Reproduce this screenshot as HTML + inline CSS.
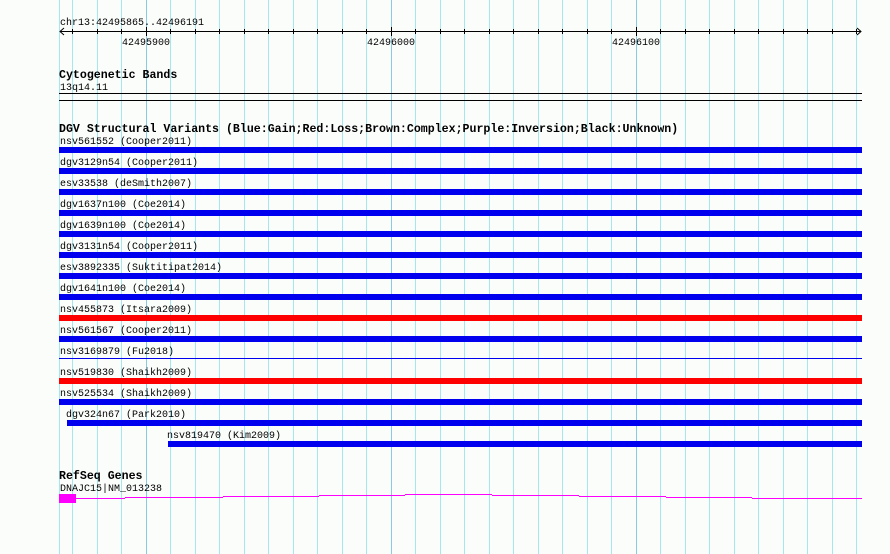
<!DOCTYPE html>
<html><head><style>
html,body{margin:0;padding:0;background:#fbfdfb;}
svg{display:block}
text{font-family:"Liberation Mono",monospace;font-size:10px;fill:#000}
.b{font-weight:bold;font-size:11.6px}
</style></head><body>
<svg width="890" height="554" xmlns="http://www.w3.org/2000/svg">
<rect width="890" height="554" fill="#fbfdfb"/>
<g stroke="#a6e6ee" stroke-width="1">
<line x1="59.5" y1="0" x2="59.5" y2="554"/>
<line x1="72.5" y1="0" x2="72.5" y2="554"/>
<line x1="97.5" y1="0" x2="97.5" y2="554"/>
<line x1="121.5" y1="0" x2="121.5" y2="554"/>
<line x1="146.5" y1="0" x2="146.5" y2="554" stroke="#88cce4"/>
<line x1="170.5" y1="0" x2="170.5" y2="554"/>
<line x1="195.5" y1="0" x2="195.5" y2="554"/>
<line x1="219.5" y1="0" x2="219.5" y2="554"/>
<line x1="244.5" y1="0" x2="244.5" y2="554"/>
<line x1="268.5" y1="0" x2="268.5" y2="554"/>
<line x1="293.5" y1="0" x2="293.5" y2="554"/>
<line x1="317.5" y1="0" x2="317.5" y2="554"/>
<line x1="342.5" y1="0" x2="342.5" y2="554"/>
<line x1="366.5" y1="0" x2="366.5" y2="554"/>
<line x1="391.5" y1="0" x2="391.5" y2="554" stroke="#88cce4"/>
<line x1="415.5" y1="0" x2="415.5" y2="554"/>
<line x1="440.5" y1="0" x2="440.5" y2="554"/>
<line x1="464.5" y1="0" x2="464.5" y2="554"/>
<line x1="489.5" y1="0" x2="489.5" y2="554"/>
<line x1="513.5" y1="0" x2="513.5" y2="554"/>
<line x1="538.5" y1="0" x2="538.5" y2="554"/>
<line x1="562.5" y1="0" x2="562.5" y2="554"/>
<line x1="587.5" y1="0" x2="587.5" y2="554"/>
<line x1="611.5" y1="0" x2="611.5" y2="554"/>
<line x1="636.5" y1="0" x2="636.5" y2="554" stroke="#88cce4"/>
<line x1="660.5" y1="0" x2="660.5" y2="554"/>
<line x1="685.5" y1="0" x2="685.5" y2="554"/>
<line x1="709.5" y1="0" x2="709.5" y2="554"/>
<line x1="734.5" y1="0" x2="734.5" y2="554"/>
<line x1="758.5" y1="0" x2="758.5" y2="554"/>
<line x1="783.5" y1="0" x2="783.5" y2="554"/>
<line x1="807.5" y1="0" x2="807.5" y2="554"/>
<line x1="832.5" y1="0" x2="832.5" y2="554"/>
<line x1="856.5" y1="0" x2="856.5" y2="554"/>
</g>
<g stroke="#000">
<line x1="72.5" y1="29" x2="72.5" y2="34"/>
<line x1="97.5" y1="29" x2="97.5" y2="34"/>
<line x1="121.5" y1="29" x2="121.5" y2="34"/>
<line x1="146.5" y1="27" x2="146.5" y2="36"/>
<line x1="170.5" y1="29" x2="170.5" y2="34"/>
<line x1="195.5" y1="29" x2="195.5" y2="34"/>
<line x1="219.5" y1="29" x2="219.5" y2="34"/>
<line x1="244.5" y1="29" x2="244.5" y2="34"/>
<line x1="268.5" y1="29" x2="268.5" y2="34"/>
<line x1="293.5" y1="29" x2="293.5" y2="34"/>
<line x1="317.5" y1="29" x2="317.5" y2="34"/>
<line x1="342.5" y1="29" x2="342.5" y2="34"/>
<line x1="366.5" y1="29" x2="366.5" y2="34"/>
<line x1="391.5" y1="27" x2="391.5" y2="36"/>
<line x1="415.5" y1="29" x2="415.5" y2="34"/>
<line x1="440.5" y1="29" x2="440.5" y2="34"/>
<line x1="464.5" y1="29" x2="464.5" y2="34"/>
<line x1="489.5" y1="29" x2="489.5" y2="34"/>
<line x1="513.5" y1="29" x2="513.5" y2="34"/>
<line x1="538.5" y1="29" x2="538.5" y2="34"/>
<line x1="562.5" y1="29" x2="562.5" y2="34"/>
<line x1="587.5" y1="29" x2="587.5" y2="34"/>
<line x1="611.5" y1="29" x2="611.5" y2="34"/>
<line x1="636.5" y1="27" x2="636.5" y2="36"/>
<line x1="660.5" y1="29" x2="660.5" y2="34"/>
<line x1="685.5" y1="29" x2="685.5" y2="34"/>
<line x1="709.5" y1="29" x2="709.5" y2="34"/>
<line x1="734.5" y1="29" x2="734.5" y2="34"/>
<line x1="758.5" y1="29" x2="758.5" y2="34"/>
<line x1="783.5" y1="29" x2="783.5" y2="34"/>
<line x1="807.5" y1="29" x2="807.5" y2="34"/>
<line x1="832.5" y1="29" x2="832.5" y2="34"/>
<line x1="856.5" y1="29" x2="856.5" y2="34"/>
</g>
<text x="60" y="25">chr13:42495865..42496191</text>
<line x1="60" y1="31.5" x2="861" y2="31.5" stroke="#000"/>
<polyline points="64,28 60,31.5 64,35" fill="none" stroke="#000"/>
<polyline points="857,28 861,31.5 857,35" fill="none" stroke="#000"/>
<text x="122" y="45">42495900</text>
<text x="367" y="45">42496000</text>
<text x="612" y="45">42496100</text>

<text class="b" x="59" y="78">Cytogenetic Bands</text>
<text x="60" y="90">13q14.11</text>
<line x1="59" y1="93.5" x2="862" y2="93.5" stroke="#000"/>
<line x1="59" y1="100.5" x2="862" y2="100.5" stroke="#000"/>

<text class="b" x="59" y="132">DGV Structural Variants (Blue:Gain;Red:Loss;Brown:Complex;Purple:Inversion;Black:Unknown)</text>
<g>
<text x="60" y="144">nsv561552 (Cooper2011)</text><rect x="59" y="147" width="803" height="6" fill="#0000ee"/>
<text x="60" y="165">dgv3129n54 (Cooper2011)</text><rect x="59" y="168" width="803" height="6" fill="#0000ee"/>
<text x="60" y="186">esv33538 (deSmith2007)</text><rect x="59" y="189" width="803" height="6" fill="#0000ee"/>
<text x="60" y="207">dgv1637n100 (Coe2014)</text><rect x="59" y="210" width="803" height="6" fill="#0000ee"/>
<text x="60" y="228">dgv1639n100 (Coe2014)</text><rect x="59" y="231" width="803" height="6" fill="#0000ee"/>
<text x="60" y="249">dgv3131n54 (Cooper2011)</text><rect x="59" y="252" width="803" height="6" fill="#0000ee"/>
<text x="60" y="270">esv3892335 (Suktitipat2014)</text><rect x="59" y="273" width="803" height="6" fill="#0000ee"/>
<text x="60" y="291">dgv1641n100 (Coe2014)</text><rect x="59" y="294" width="803" height="6" fill="#0000ee"/>
<text x="60" y="312">nsv455873 (Itsara2009)</text><rect x="59" y="315" width="803" height="6" fill="#ff0000"/>
<text x="60" y="333">nsv561567 (Cooper2011)</text><rect x="59" y="336" width="803" height="6" fill="#0000ee"/>
<text x="60" y="354">nsv3169879 (Fu2018)</text><rect x="59" y="358" width="803" height="1" fill="#0000ee"/>
<text x="60" y="375">nsv519830 (Shaikh2009)</text><rect x="59" y="378" width="803" height="6" fill="#ff0000"/>
<text x="60" y="396">nsv525534 (Shaikh2009)</text><rect x="59" y="399" width="803" height="6" fill="#0000ee"/>
<text x="66" y="417">dgv324n67 (Park2010)</text><rect x="67" y="420" width="795" height="6" fill="#0000ee"/>
<text x="167" y="438">nsv819470 (Kim2009)</text><rect x="168" y="441" width="694" height="6" fill="#0000ee"/>
</g>

<text class="b" x="59" y="479">RefSeq Genes</text>
<text x="60" y="491">DNAJC15|NM_013238</text>
<rect x="59" y="494" width="17" height="9" fill="#ff00ff"/>
<g stroke="#ff00ff" stroke-width="1">
<line x1="76" y1="498.5" x2="125" y2="498.5"/>
<line x1="125" y1="497.5" x2="223" y2="497.5"/>
<line x1="223" y1="496.5" x2="319" y2="496.5"/>
<line x1="319" y1="495.5" x2="405" y2="495.5"/>
<line x1="405" y1="494.5" x2="492" y2="494.5"/>
<line x1="492" y1="495.5" x2="579" y2="495.5"/>
<line x1="579" y1="496.5" x2="666" y2="496.5"/>
<line x1="666" y1="497.5" x2="752" y2="497.5"/>
<line x1="752" y1="498.5" x2="862" y2="498.5"/>
</g>
</svg>
</body></html>
